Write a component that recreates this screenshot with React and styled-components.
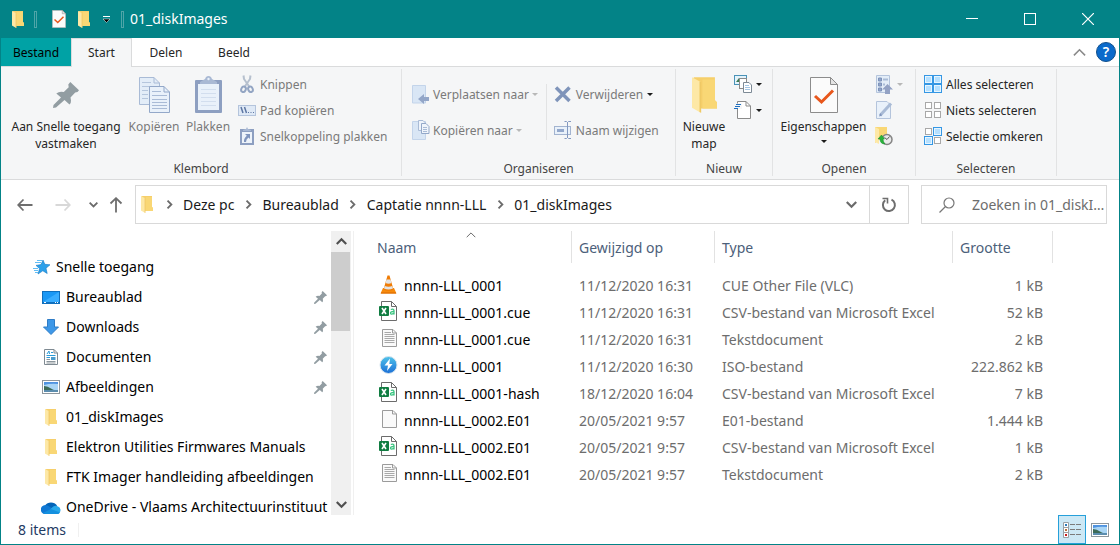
import React from "react";
import styled, { createGlobalStyle, css } from "styled-components";

const teal = "#038387";
const line = "#dadbdc";
const muted = "#6d6d6d";

const GlobalStyle = createGlobalStyle`
  *, *::before, *::after { box-sizing: border-box; }
  body { margin: 0; background: #fff; }
  body, button, input, table { font-family: "Noto Sans", "Open Sans", sans-serif; }
  button { margin: 0; padding: 0; border: 0; background: none; color: inherit; font-size: inherit; }
  svg { display: block; flex: none; }
`;

/* ---------- icons ---------- */

const Svg = ({ w, h, children, ...rest }) => (
  <svg width={w} height={h} viewBox={`0 0 ${w} ${h}`} fill="none" aria-hidden="true" {...rest}>
    {children}
  </svg>
);

const Folder = ({ w = 12, h = 17 }) => (
  <svg width={w} height={h} viewBox="0 0 12 17" fill="none" aria-hidden="true">
    <path d="M1 0H11V11L12 12V15H4L0 14V1Z" fill="#f6cf6b" />
    <path d="M5 1H11V11L12 12V15H5Z" fill="#f9d775" />
    <path d="M0 0L4.2 2.2V17L0 14.6Z" fill="#fde8a6" />
    <path d="M3.6 2V16.6L4.4 17V2.3Z" fill="#efc965" />
  </svg>
);

const CheckDoc = ({ w, h }) => (
  <svg width={w} height={h} viewBox="0 0 28 36" fill="none" aria-hidden="true">
    <path d="M.5 .5H20.5L27.5 7.5V35.5H.5Z" fill="#fbfbfb" stroke="#8c8c8c" />
    <path d="M20.5 .5V7.5H27.5Z" fill="#e4e4e4" stroke="#8c8c8c" />
    <path d="M5 19L11.500 25L23 13.500" stroke="#e8571c" strokeWidth="3" />
  </svg>
);

const Pin = ({ size = 26, color = "#929da2" }) => (
  <svg width={size} height={size} viewBox="0 0 26 26" aria-hidden="true">
    <path
      fill={color}
      d="M17.300 0L26 8.300L24.500 10L22.200 10.500L17.500 15.500L18 18.500Q18.200 21 16.500 22.500L11.500 18L3 25.500L0 26L.5 23L8 15.500L3.300 11.500Q6.500 8.800 10.800 10L15.700 5.200L15.300 2.500Z"
    />
  </svg>
);

const CopyBig = () => (
  <Svg w={31} h={36}>
    <path d="M.5 .5H15L20.500 6V27.500H.5Z" fill="#e3edf8" stroke="#a9bbd6" />
    <path d="M15 .5V6H20.500" stroke="#a9bbd6" />
    <path d="M3 5.500H12M3 9.500H12M3 13.500H9M3 17.500H9M3 21.500H9" stroke="#b5c6dd" />
    <path d="M10.500 9.500H25L30.500 15V35.500H10.500Z" fill="#e9f1fa" stroke="#93a8c9" />
    <path d="M25 9.500V15H30.500" stroke="#93a8c9" />
    <path d="M13 14.500H22M13 18.500H28M13 22.500H28M13 25.500H28M13 28.500H28M13 31.500H28" stroke="#a9bbd6" />
  </Svg>
);

const PasteBig = () => (
  <Svg w={27} h={37}>
    <rect x="0" y="4" width="27" height="33" rx="1" fill="#8d9fc1" />
    <rect x="3" y="8" width="21" height="26" fill="#e9f1fa" />
    <path d="M6 13.500H21M6 17.500H21M6 21.500H21M6 25.500H21M6 29.500H21" stroke="#d2deee" />
    <path d="M5 8V6L10 3L11 1Q13.500 -1 16 1L17 3L22 6V8Z" fill="#a9b9d4" />
    <circle cx="13.500" cy="3" r="1.200" fill="#e9f1fa" />
  </Svg>
);

const Scissors = () => (
  <Svg w={18} h={18}>
    <path d="M5.500 0.500L6 4L11.500 12M12.500 0.500L12 4L6.500 12" stroke="#b6c0ce" strokeWidth="2" />
    <ellipse cx="5.500" cy="14.300" rx="2.200" ry="2.800" transform="rotate(25 5.500 14.300)" stroke="#93a5c3" strokeWidth="2" />
    <ellipse cx="12.500" cy="14.300" rx="2.200" ry="2.800" transform="rotate(-25 12.500 14.300)" stroke="#93a5c3" strokeWidth="2" />
  </Svg>
);

const PathIcon = () => (
  <Svg w={18} h={11}>
    <rect x=".5" y=".5" width="17" height="10" fill="#dfe9f6" stroke="#b4c4dc" />
    <path d="M3 2L5 8M6.500 2L8.500 8" stroke="#5d76a3" strokeWidth="1.500" />
    <path d="M10 7.500H11M12.500 7.500H13.500M15 7.500H16" stroke="#5d76a3" />
  </Svg>
);

const PasteLink = () => (
  <Svg w={18} h={18}>
    <rect x="2" y="2" width="14" height="16" fill="#8d9fc1" />
    <rect x="4" y="5" width="10" height="11" fill="#edf3fa" />
    <path d="M5 4V3L8 2L9 0L10 2L13 3V4Z" fill="#a9b9d4" />
    <path d="M7 7H12V12L10.500 10.500Q8 12 8 15H6Q5.500 11.500 8.800 8.800Z" fill="#8095bd" />
  </Svg>
);

const MoveTo = () => (
  <Svg w={18} h={19}>
    <path d="M.5 .5H13.500V18H.5Z" fill="#d9e6f5" stroke="#c3d4ea" />
    <path d="M12 9V12H17V16H12V19L6 14Z" fill="#93a6c8" />
  </Svg>
);

const CopyTo = () => (
  <Svg w={18} h={20}>
    <path d="M.5 1.500H13.500V19.500H.5Z" fill="#d9e6f5" stroke="#c3d4ea" />
    <path d="M6.500 .5H11L13.500 3V10.500H6.500Z" fill="#eff4fb" stroke="#a9bbd6" />
    <path d="M9.500 3.500H14L17 6.500V13.500H9.500Z" fill="#eff4fb" stroke="#93a8c9" />
    <path d="M11 7.500H15M11 9.500H15M11 11.500H15" stroke="#a9bbd6" />
  </Svg>
);

const DeleteX = () => (
  <Svg w={18} h={17}>
    <path d="M2 1.500L15.500 15M15.500 1.500L2 15" stroke="#7f94ba" strokeWidth="3.500" />
  </Svg>
);

const RenameIcon = () => (
  <Svg w={18} h={18}>
    <rect x=".5" y="5.500" width="16" height="8" fill="#e9f1fa" stroke="#a3b4d0" />
    <rect x="3" y="8" width="7" height="3" fill="#93a8cc" />
    <path d="M13.500 1V17M10.500 .5H12.500L13.500 1.500L14.500 .5H17M10.500 17.500H12.500L13.500 16.500L14.500 17.500H17" stroke="#8399c0" />
  </Svg>
);

const NewItem = () => (
  <Svg w={18} h={18}>
    <rect x=".5" y=".5" width="12" height="9" fill="#e4f3fb" stroke="#4a93b8" />
    <path d="M2 7L5 3L8 7Z" fill="#3a7a53" />
    <rect x="5.500" y="3.500" width="7" height="10" fill="#fff" stroke="#8b8b8b" />
    <path d="M9.500 7.500H15L17.500 10V17.500H9.500Z" fill="#fff" stroke="#7d8a96" />
    <path d="M11 10.500H15M11 12.500H16M11 14.500H16" stroke="#a5c6e4" />
  </Svg>
);

const EasyAccess = () => (
  <Svg w={18} h={18}>
    <path d="M3.500 .5H12L16.500 5V17.500H3.500Z" fill="#fff" stroke="#8b8b8b" />
    <path d="M12 .5V5H16.500" stroke="#8b8b8b" />
    <path d="M1 2.500H8V8H0Z" fill="#f5f6f7" />
    <path d="M2 3.500H7M1 5.500H6M0 7.500H4" stroke="#1f6fc0" />
  </Svg>
);

const OpenIcon = () => (
  <Svg w={17} h={19}>
    <path d="M.5 .5H13.500V17.500H.5Z" fill="#e3edf8" stroke="#b4c4dc" />
    <path d="M2.500 3H5.500V6H2.500ZM2.500 8H5.500V11H2.500ZM2.500 13H5.500V16H2.500Z" fill="#93a6c8" stroke="#7d92ba" />
    <path d="M7 4.500H12M7 9.500H9" stroke="#a9bbd6" strokeWidth="2" />
    <path d="M11.500 9L17 14.500H14V19H9V14.500H6Z" fill="#93a2c4" />
  </Svg>
);

const EditIcon = () => (
  <Svg w={17} h={18}>
    <path d="M.5 .5H11L14.500 4V17.500H.5Z" fill="#e9f1fa" stroke="#b4c4dc" />
    <path d="M15 2.500L4 14.500" stroke="#a9bbd6" strokeWidth="3" />
    <path d="M4.500 12L3 15.500L6 14.500Z" fill="#8095bd" />
  </Svg>
);

const HistoryIcon = () => (
  <Svg w={18} h={19}>
    <path d="M0 0H12V13H4L0 16Z" fill="#f9d775" />
    <path d="M0 0L4 2V17L0 15Z" fill="#fde8a6" />
    <circle cx="12" cy="12.500" r="5" fill="#e9eaea" stroke="#858585" strokeWidth="1.500" />
    <path d="M12 12.500L14.500 9.500M12 12.500L9.500 10.500" stroke="#5a5a5a" />
    <path d="M3 12L6.500 8L9.500 12H8Q8 15 10 17Q5 17 5 12Z" fill="#28b43a" stroke="#178a2a" strokeWidth=".5" />
  </Svg>
);

const SelectIcon = ({ on }) => (
  <Svg w={18} h={18}>
    {[[0, 0], [9, 0], [0, 9], [9, 9]].map(([x, y], i) =>
      on[i] ? (
        <g key={i}>
          <rect x={x} y={y} width="9" height="9" fill="#3597e4" />
          <rect x={x + 1} y={y + 1} width="7" height="7" fill="#e6f5ff" />
          <rect x={x + 2} y={y + 2} width="5" height="5" fill="#b5e0ff" />
        </g>
      ) : (
        <rect key={i} x={x + 1.5} y={y + 1.5} width="6" height="6" fill="#fff" stroke="#a8a8a8" />
      )
    )}
  </Svg>
);

const Caret = ({ color = "#1b1b1b" }) => (
  <Svg w={6} h={3}>
    <path d="M0 0H6L3 3Z" fill={color} />
  </Svg>
);

const Chevron = ({ dir, color = "#6b6b6b", w = 9, sw = 2 }) => {
  const turn = { down: 0, up: 180, right: -90 }[dir];
  return (
    <svg width={w} height={w} viewBox="0 0 10 10" fill="none" aria-hidden="true">
      <path d="M.7 2.800L5 7.100L9.300 2.800" stroke={color} strokeWidth={sw} transform={`rotate(${turn} 5 5)`} />
    </svg>
  );
};

const Arrow = ({ turn = 0, color = "#6e6e6e" }) => (
  <Svg w={16} h={16}>
    <path d="M15.500 8H1.500M6.500 2.500L1.200 8L6.500 13.500" stroke={color} strokeWidth="1.800" transform={`rotate(${turn} 8 8)`} />
  </Svg>
);

const Star = () => (
  <Svg w={18} h={16}>
    <path d="M10 1L11.800 5.300L17 5.800L13 9.200L14.200 14.500L9.800 11.800L5 15L6.600 9.600L3 6.400L8 5.600Z" fill="#2ba0ea" stroke="#1479c4" strokeWidth=".6" />
    <path d="M4 1.500H9M2 3.500H8M0 9.500H5M1 11.500H5M2 13.500H5" stroke="#62bdf5" />
  </Svg>
);

const Desktop = () => (
  <Svg w={18} h={13}>
    <rect x=".5" y=".5" width="17" height="12" fill="#1a98f5" stroke="#0f6fbd" />
    <path d="M1 11L17 1V11Z" fill="#39adff" />
    <path d="M1 11.500H17" stroke="#0f6fbd" />
    <path d="M2 11.500H4M13 11.500H14M15 11.500H16" stroke="#fff" />
  </Svg>
);

const Download = () => (
  <Svg w={18} h={16}>
    <path d="M5.500 .5H12.500V8H16.500L9 15.500L1.500 8H5.500Z" fill="#3e98e8" stroke="#2f7cc6" />
  </Svg>
);

const Documents = () => (
  <Svg w={18} h={16}>
    <path d="M2.500 .5H12L15.500 4V15.500H2.500Z" fill="#fff" stroke="#7f8a92" />
    <path d="M12 .5V4H15.500" stroke="#7f8a92" />
    <path d="M5 5L7 2L7.500 5M9 3.500H11M4.500 6.500H13.500M4.500 8.500H8" stroke="#2b9bd8" />
    <path d="M9 8H13.500V11H9Z" fill="#4b9ccd" />
    <path d="M4.500 10.500H8M4.500 12.500H13.500M4.500 14H13.500" stroke="#8c969c" />
  </Svg>
);

const Picture = () => (
  <Svg w={18} h={14}>
    <rect x=".5" y=".5" width="17" height="13" fill="#fff" stroke="#8e979d" />
    <rect x="2" y="2" width="14" height="10" fill="#a9d5f5" />
    <path d="M2 2H16V4Q9 3 2 5Z" fill="#4f93e0" />
    <path d="M2 6Q6 6 9 8.500T16 10H2Z" fill="#3d6b58" />
    <path d="M2 10H16V12H2Z" fill="#5b8dae" />
  </Svg>
);

const OneDrive = () => (
  <Svg w={20} h={13}>
    <path d="M4 4.500A7 6 0 0 1 16 4.500L12 9H2Z" fill="#0364b8" />
    <path d="M4.500 13A4.500 4.500 0 1 1 6.500 4.600L18 11.500Q17 13 15 13Z" fill="#0f78d4" />
    <path d="M6 13L10.500 7Q14 3.500 17 5.500A3.900 3.900 0 0 1 16 13Z" fill="#28a8ea" />
    <path d="M2 12Q3 13 4.500 13H16Q18 13 19 11.500L10 8Z" fill="#1490df" />
  </Svg>
);

const Vlc = () => (
  <Svg w={20} h={19}>
    <path d="M4 13H15L17.500 18.500H1.500Z" fill="#f78b0c" />
    <path d="M8.500 .5H10.500L14.500 14.500Q9.500 17 4.500 14.500Z" fill="#f07c05" />
    <path d="M7.500 4.500H11.500L12.500 8Q9.500 9.500 6.500 8ZM5.700 11Q9.500 12.500 13.300 11L14 13.500Q9.500 15.500 5 13.500Z" fill="#e3e3e3" />
    <path d="M2 18H17" stroke="#d86600" />
  </Svg>
);

const Excel = () => (
  <Svg w={20} h={20}>
    <path d="M2.500 .5H12.500L17.500 5.500V19.500H2.500Z" fill="#fff" stroke="#6c6c6c" />
    <path d="M12.500 .5V5.500H17.500" stroke="#6c6c6c" />
    <rect x="0" y="5" width="10" height="10" rx="1" fill="#107c41" />
    <path d="M3 7L7 13M7 7L3 13" stroke="#fff" strokeWidth="1.600" />
    <path d="M11.800 8.500Q15 7.400 15 9.800V13.500M15 10.500Q11.500 10.300 11.500 12.100T15 12.300" stroke="#3cc481" strokeWidth="1.300" />
  </Svg>
);

const TextFile = ({ blank }) => (
  <Svg w={18} h={18}>
    <path d="M2.500 .5H13L16.500 4V17.500H2.500Z" fill="#fafafa" stroke="#9b9b9b" />
    <path d="M12.500 .5V4H16.500" stroke="#9b9b9b" />
    {!blank && <path d="M4.500 3.500H11M4.500 5.500H14.500M4.500 7.500H14.500M4.500 9.500H14.500M4.500 11.500H14.500M4.500 13.500H14.500" stroke="#a9a9a9" />}
  </Svg>
);

const Iso = () => (
  <Svg w={20} h={18}>
    <defs>
      <linearGradient id="disc" x1="0" y1="0" x2="0" y2="1">
        <stop offset="0" stopColor="#4fc3ea" />
        <stop offset="1" stopColor="#1c6fd6" />
      </linearGradient>
    </defs>
    <circle cx="9.500" cy="9" r="8.500" fill="url(#disc)" stroke="#d6e4ee" />
    <path d="M11 2.500L5.500 9.500H9L8 15L13.500 8H10.300Z" fill="#fff" />
  </Svg>
);

const DetailsIcon = () => (
  <Svg w={18} h={16}>
    <path d="M.5 .5H5.500V15.500H.5ZM.5 5.500H5.500M.5 10.500H5.500" fill="#fff" stroke="#9aa0a4" />
    <path d="M2 2H4V4H2Z" fill="#2a7ab8" />
    <path d="M2 7H4V9H2Z" fill="#b8703a" />
    <path d="M2 12H4V14H2Z" fill="#c81e1e" />
    <path d="M7 2.500H12M13 2.500H18M7 7.500H12M13 7.500H18M7 12.500H12M13 12.500H18" stroke="#7b7b7b" />
  </Svg>
);

/* ---------- window and title bar ---------- */

const Window = styled.div`
  display: flex;
  flex-direction: column;
  height: 100vh;
  border: solid ${teal};
  border-width: 0 1px 1px;
  background: #fff;
  color: #000;
`;

const TitleBar = styled.header`
  display: flex;
  align-items: center;
  flex: none;
  height: 38px;
  padding-left: 10px;
  background: ${teal};
  color: #fff;
`;

const QuickButton = styled.button`
  display: grid;
  place-items: center;
  width: ${(p) => p.$w || 26}px;
  height: 26px;
`;

const BarDivider = styled.span`
  width: 3px;
  height: 17px;
  margin: 0 ${(p) => p.$right}px 0 ${(p) => p.$left}px;
  border: 1px solid #4fa5a8;
`;

const WindowTitle = styled.h1`
  flex: 1;
  margin: 0;
  font-size: 14px;
  font-weight: 400;
  line-height: 20px;
`;

const WindowButtons = styled.div`
  display: flex;
  padding-right: 2px;
`;

const WindowButton = styled.button`
  display: grid;
  place-items: center;
  width: 58px;
  height: 38px;
`;

/* ---------- ribbon ---------- */

const Tabs = styled.nav`
  display: flex;
  align-items: stretch;
  flex: none;
  height: 29px;
  border-bottom: 1px solid ${line};
  font-size: 12px;
`;

const Tab = styled.button`
  width: ${(p) => p.$w || 68}px;
  color: #262626;
  ${(p) => p.$file && css`
    background: #00a2a5;
    color: #000;
  `}
  ${(p) => p.$active && css`
    margin-bottom: -1px;
    padding-bottom: 2px;
    border: solid ${line};
    border-width: 1px 1px 0;
    background: #f5f6f7;
  `}
`;

const TabTools = styled.div`
  display: flex;
  align-items: center;
  gap: 10px;
  margin-left: auto;
  padding-right: 3px;
`;

const HelpButton = styled.button`
  width: 20px;
  height: 20px;
  border: 1px solid #12508c;
  border-radius: 50%;
  background: #0a6acb;
  color: #fff;
  font-size: 14px;
  font-weight: 600;
  line-height: 16px;
`;

const Ribbon = styled.div`
  display: flex;
  flex: none;
  height: 113px;
  padding: 2px 0 3px;
  border-bottom: 1px solid ${line};
  background: #f5f6f7;
  font-size: 12px;
  line-height: 17px;
  color: #262626;
`;

const Group = styled.section`
  display: flex;
  flex-direction: column;
  flex: none;
  width: ${(p) => p.$w}px;
  border-right: 1px solid #e2e3e4;
`;

const GroupBody = styled.div`
  display: flex;
  flex: 1;
  padding: 2px 0 0 ${(p) => p.$pad}px;
`;

const GroupName = styled.h2`
  margin: 0;
  color: #444;
  font-size: 12px;
  font-weight: 400;
  line-height: 15px;
  text-align: center;
`;

const BigButton = styled.button`
  display: flex;
  flex-direction: column;
  align-items: center;
  width: ${(p) => p.$w}px;
  height: 81px;
  line-height: 17px;
  white-space: nowrap;
  color: ${(p) => (p.disabled ? "#7a7a7a" : "#262626")};
`;

const BigIcon = styled.span`
  display: grid;
  place-items: center;
  height: 47px;
`;

const CaretSlot = styled.span`
  display: grid;
  place-items: center;
  height: 12px;
`;

const Stack = styled.div`
  display: flex;
  flex-direction: column;
  gap: ${(p) => p.$gap || 0}px;
  padding: ${(p) => p.$top || 0}px 0 0 ${(p) => p.$left || 0}px;
`;

const SmallButton = styled.button`
  display: flex;
  align-items: center;
  gap: ${(p) => p.$gap || 4}px;
  height: 26px;
  white-space: nowrap;
  color: ${(p) => (p.disabled ? "#7a7a7a" : "#262626")};
`;

const SmallIcon = styled.span`
  display: grid;
  place-items: center;
  width: 18px;
`;

const InnerDivider = styled.span`
  width: 1px;
  height: 56px;
  margin: 13px 0 0 8px;
  background: #e2e3e4;
`;

/* ---------- address bar ---------- */

const AddressRow = styled.div`
  display: flex;
  align-items: center;
  flex: none;
  height: 51px;
  padding: 0 12px 2px;
  font-size: 14px;
`;

const NavButton = styled.button`
  display: grid;
  place-items: center;
  width: ${(p) => p.$w}px;
  height: 30px;
`;

const AddressBox = styled.div`
  display: flex;
  align-items: center;
  flex: 1;
  height: 39px;
  margin-right: 12px;
  padding-left: 5px;
  border: 1px solid #d9d9d9;
`;

const Crumb = styled.a`
  color: #1a1a1a;
  line-height: 20px;
  text-decoration: none;
  white-space: nowrap;
`;

const CrumbArrow = styled.span`
  display: grid;
  place-items: center;
  width: 28px;
  &:nth-of-type(1) { margin-left: 2px; }
`;

const BoxButton = styled.button`
  display: grid;
  place-items: center;
  align-self: stretch;
  width: 39px;
  ${(p) => p.$push && css`margin-left: auto; width: 36px;`}
  ${(p) => p.$split && css`border-left: 1px solid #d9d9d9;`}
`;

const SearchBox = styled.label`
  display: flex;
  align-items: center;
  gap: 17px;
  width: 186px;
  height: 39px;
  padding: 0 1px 0 17px;
  border: 1px solid #d9d9d9;
`;

const SearchInput = styled.input`
  flex: 1;
  min-width: 0;
  padding: 0;
  border: 0;
  outline: 0;
  background: none;
  font-size: 14px;
  text-overflow: ellipsis;
  &::placeholder { color: ${muted}; opacity: 1; }
`;

/* ---------- body ---------- */

const Body = styled.div`
  display: flex;
  flex: 1;
  min-height: 0;
`;

const Sidebar = styled.aside`
  display: flex;
  flex: none;
  width: 353px;
  padding-right: 2px;
  border-right: 1px solid #f0f0f0;
`;

const Places = styled.ul`
  flex: 1;
  min-width: 0;
  margin: 0;
  padding: 21px 0 0;
  overflow: hidden;
  list-style: none;
`;

const Place = styled.a`
  display: flex;
  align-items: center;
  gap: 5px;
  height: 30px;
  padding: 0 4px 0 ${(p) => (p.$root ? 32 : 40)}px;
  color: #000;
  font-size: 14px;
  line-height: 20px;
  text-decoration: none;
  white-space: nowrap;
`;

const PlaceIcon = styled.span`
  display: flex;
  justify-content: center;
  flex: none;
  width: ${(p) => (p.$root ? 18 : 20)}px;
`;

const PlaceName = styled.span`
  flex: 1;
`;

const ScrollTrack = styled.div`
  display: flex;
  flex-direction: column;
  justify-content: space-between;
  width: 20px;
  background: #f0f0f0;
`;

const ScrollButton = styled.button`
  display: grid;
  place-items: center;
  height: 21px;
`;

const ScrollThumb = styled.div`
  height: 79px;
  margin: 0 1px auto 0;
  background: #cdcdcd;
`;

const Files = styled.main`
  flex: 1;
  min-width: 0;
  overflow: hidden;
`;

const FileTable = styled.table`
  width: 699px;
  table-layout: fixed;
  border-collapse: separate;
  border-spacing: 0;
  font-size: 14px;
  line-height: 20px;
`;

const HeadCell = styled.th`
  position: relative;
  height: 32px;
  padding: 2px 0 0 ${(p) => p.$pad || 7}px;
  border-right: 1px solid #e2e2e2;
  color: #4c607a;
  font-weight: 400;
  text-align: left;
`;

const SortMark = styled.span`
  position: absolute;
  top: -1px;
  right: 95px;
`;

const Cell = styled.td`
  height: 27px;
  padding: 0 ${(p) => (p.$right ? 10 : 0)}px 0 7px;
  color: ${muted};
  text-align: ${(p) => (p.$right ? "right" : "left")};
  white-space: nowrap;
`;

const NameCell = styled(Cell)`
  padding-left: 25px;
  color: #000;
`;

const FileName = styled.span`
  display: flex;
  align-items: center;
  height: 27px;
  gap: 5px;
`;

const FileIcon = styled.span`
  display: flex;
  justify-content: center;
  width: 20px;
  padding-bottom: 3px;
`;

const HeadGap = styled.tr`
  height: 9px;
`;

const StatusBar = styled.footer`
  display: flex;
  align-items: center;
  flex: none;
  height: 29px;
  padding: 0 5px 0 17px;
  color: #1f3b63;
  font-size: 14px;
`;

const Count = styled.span`
  padding-right: 12px;
  border-right: 1px solid #f0f0f0;
  line-height: 14px;
`;

const ViewButton = styled.button`
  display: grid;
  place-items: center;
  width: 28px;
  height: 29px;
  ${(p) => p.$on && css`
    margin-left: auto;
    border: 1px solid #26a0da;
    background: #cce8f5;
  `}
`;

const crumbs = ["Deze pc", "Bureaublad", "Captatie nnnn-LLL", "01_diskImages"];

const places = [
  ["Bureaublad", <Desktop />, true],
  ["Downloads", <Download />, true],
  ["Documenten", <Documents />, true],
  ["Afbeeldingen", <Picture />, true],
  ["01_diskImages", <Folder />],
  ["Elektron Utilities Firmwares Manuals", <Folder />],
  ["FTK Imager handleiding afbeeldingen", <Folder />],
  ["OneDrive - Vlaams Architectuurinstituut", <OneDrive />],
];

const csv = "CSV-bestand van Microsoft Excel";
const files = [
  [<Vlc />, "nnnn-LLL_0001", "11/12/2020 16:31", "CUE Other File (VLC)", "1 kB"],
  [<Excel />, "nnnn-LLL_0001.cue", "11/12/2020 16:31", csv, "52 kB"],
  [<TextFile />, "nnnn-LLL_0001.cue", "11/12/2020 16:31", "Tekstdocument", "2 kB"],
  [<Iso />, "nnnn-LLL_0001", "11/12/2020 16:30", "ISO-bestand", "222.862 kB"],
  [<Excel />, "nnnn-LLL_0001-hash", "18/12/2020 16:04", csv, "7 kB"],
  [<TextFile blank />, "nnnn-LLL_0002.E01", "20/05/2021 9:57", "E01-bestand", "1.444 kB"],
  [<Excel />, "nnnn-LLL_0002.E01", "20/05/2021 9:57", csv, "1 kB"],
  [<TextFile />, "nnnn-LLL_0002.E01", "20/05/2021 9:57", "Tekstdocument", "2 kB"],
];

const Small = ({ icon, label, title, caret, disabled, gap }) => (
  <SmallButton disabled={disabled} aria-label={title} $gap={gap}>
    <SmallIcon>{icon}</SmallIcon>
    {label}
    {caret && <Caret color={caret} />}
  </SmallButton>
);

export default function App() {
  return (
    <Window>
      <GlobalStyle />
      <TitleBar>
        <QuickButton $w={14} aria-label="Map"><Folder /></QuickButton>
        <BarDivider $left={9} $right={8} />
        <QuickButton $w={28} aria-label="Eigenschappen"><CheckDoc w={14} h={18} /></QuickButton>
        <QuickButton $w={22} aria-label="Nieuwe map"><Folder /></QuickButton>
        <QuickButton $w={22} aria-label="Werkbalk aanpassen">
          <Svg w={7} h={7}><path d="M0 .5H7" stroke="#fff" /><path d="M0 3H7L3.500 6.500Z" fill="#000" stroke="#fff" strokeWidth=".5" /></Svg>
        </QuickButton>
        <BarDivider $left={4} $right={6} />
        <WindowTitle>01_diskImages</WindowTitle>
        <WindowButtons>
          <WindowButton aria-label="Minimaliseren"><Svg w={12} h={12}><path d="M0 5.500H12" stroke="#fff" /></Svg></WindowButton>
          <WindowButton aria-label="Maximaliseren"><Svg w={12} h={12}><rect x=".5" y=".5" width="11" height="11" stroke="#fff" /></Svg></WindowButton>
          <WindowButton aria-label="Sluiten"><Svg w={12} h={12}><path d="M0 0L12 12M12 0L0 12" stroke="#fff" strokeWidth="1.200" /></Svg></WindowButton>
        </WindowButtons>
      </TitleBar>

      <Tabs>
        <Tab $file $w={70}>Bestand</Tab>
        <Tab $active $w={61}>Start</Tab>
        <Tab>Delen</Tab>
        <Tab>Beeld</Tab>
        <TabTools>
          <button aria-label="Lint minimaliseren"><Chevron dir="up" w={13} sw={1.2} color="#8a8a8a" /></button>
          <HelpButton aria-label="Help">?</HelpButton>
        </TabTools>
      </Tabs>

      <Ribbon>
        <Group $w={401}>
          <GroupBody $pad={6}>
            <BigButton $w={118}><BigIcon><Pin /></BigIcon>Aan Snelle toegang<br />vastmaken</BigButton>
            <BigButton $w={58} disabled><BigIcon><CopyBig /></BigIcon>Kopiëren</BigButton>
            <BigButton $w={50} disabled><BigIcon><PasteBig /></BigIcon>Plakken</BigButton>
            <Stack $left={5}>
              <Small disabled icon={<Scissors />} label="Knippen" />
              <Small disabled icon={<PathIcon />} label="Pad kopiëren" />
              <Small disabled icon={<PasteLink />} label="Snelkoppeling plakken" />
            </Stack>
          </GroupBody>
          <GroupName>Klembord</GroupName>
        </Group>

        <Group $w={274}>
          <GroupBody $pad={10}>
            <Stack $top={10} $gap={10}>
              <Small disabled gap={3} icon={<MoveTo />} label="Verplaatsen naar" caret="#b8b8b8" />
              <Small disabled gap={3} icon={<CopyTo />} label="Kopiëren naar" caret="#b8b8b8" />
            </Stack>
            <InnerDivider />
            <Stack $top={10} $gap={10} $left={7}>
              <Small disabled icon={<DeleteX />} label="Verwijderen" caret="#1b1b1b" />
              <Small disabled icon={<RenameIcon />} label="Naam wijzigen" />
            </Stack>
          </GroupBody>
          <GroupName>Organiseren</GroupName>
        </Group>

        <Group $w={97}>
          <GroupBody $pad={3}>
            <BigButton $w={50}><BigIcon><Folder w={25} h={36} /></BigIcon>Nieuwe<br />map</BigButton>
            <Stack $left={5}>
              <Small title="Nieuw item" icon={<NewItem />} caret="#1b1b1b" />
              <Small title="Snelle toegang" icon={<EasyAccess />} caret="#1b1b1b" />
            </Stack>
          </GroupBody>
          <GroupName>Nieuw</GroupName>
        </Group>

        <Group $w={143}>
          <GroupBody $pad={3}>
            <BigButton $w={95}>
              <BigIcon><CheckDoc w={28} h={36} /></BigIcon>Eigenschappen
              <CaretSlot><Caret /></CaretSlot>
            </BigButton>
            <Stack $left={4}>
              <Small disabled title="Openen" icon={<OpenIcon />} caret="#b8b8b8" />
              <Small disabled title="Bewerken" icon={<EditIcon />} />
              <Small title="Geschiedenis" icon={<HistoryIcon />} />
            </Stack>
          </GroupBody>
          <GroupName>Openen</GroupName>
        </Group>

        <Group $w={141}>
          <GroupBody $pad={8}>
            <Stack>
              <Small icon={<SelectIcon on={[1, 1, 1, 1]} />} label="Alles selecteren" />
              <Small icon={<SelectIcon on={[0, 0, 0, 0]} />} label="Niets selecteren" />
              <Small icon={<SelectIcon on={[0, 1, 1, 0]} />} label="Selectie omkeren" />
            </Stack>
          </GroupBody>
          <GroupName>Selecteren</GroupName>
        </Group>
      </Ribbon>

      <AddressRow>
        <NavButton $w={24} aria-label="Terug"><Arrow /></NavButton>
        <NavButton $w={52} aria-label="Vooruit"><Arrow turn={180} color="#d8d8d8" /></NavButton>
        <NavButton $w={8} aria-label="Recente locaties"><Chevron dir="down" /></NavButton>
        <NavButton $w={38} aria-label="Omhoog"><Arrow turn={90} /></NavButton>
        <AddressBox>
          <Folder />
          {crumbs.map((name) => (
            <React.Fragment key={name}>
              <CrumbArrow><Chevron dir="right" /></CrumbArrow>
              <Crumb href="#">{name}</Crumb>
            </React.Fragment>
          ))}
          <BoxButton $push aria-label="Vorige locaties"><Chevron dir="down" w={11} /></BoxButton>
          <BoxButton $split aria-label="Vernieuwen">
            <Svg w={16} h={16}>
              <path d="M10.500 2.600A6 6 0 1 1 4.200 3.300" stroke="#6e6e6e" strokeWidth="2" />
              <path d="M1.500 1.500H6.500V6.500" stroke="#6e6e6e" strokeWidth="1.600" />
            </Svg>
          </BoxButton>
        </AddressBox>
        <SearchBox>
          <Svg w={16} h={16}>
            <circle cx="10" cy="6" r="5" stroke="#777" strokeWidth="1.200" />
            <path d="M6.500 9.500L.5 15.500" stroke="#777" strokeWidth="1.200" />
          </Svg>
          <SearchInput type="text" aria-label="Zoeken" placeholder="Zoeken in 01_diskImages" />
        </SearchBox>
      </AddressRow>

      <Body>
        <Sidebar>
          <Places>
            <li>
              <Place href="#" $root><PlaceIcon $root><Star /></PlaceIcon>Snelle toegang</Place>
            </li>
            {places.map(([name, icon, pinned]) => (
              <li key={name}>
                <Place href="#">
                  <PlaceIcon>{icon}</PlaceIcon>
                  <PlaceName>{name}</PlaceName>
                  {pinned && <Pin size={13} />}
                </Place>
              </li>
            ))}
          </Places>
          <ScrollTrack>
            <ScrollButton aria-label="Omhoog schuiven"><Chevron dir="up" w={11} color="#505050" /></ScrollButton>
            <ScrollThumb />
            <ScrollButton aria-label="Omlaag schuiven"><Chevron dir="down" w={11} color="#505050" /></ScrollButton>
          </ScrollTrack>
        </Sidebar>
        <Files>
          <FileTable>
            <colgroup>
              <col width="218" /><col width="143" /><col width="238" /><col width="100" />
            </colgroup>
            <thead>
              <tr>
                <HeadCell $pad={23}>Naam<SortMark><Chevron dir="up" w={10} sw={1} /></SortMark></HeadCell>
                <HeadCell>Gewijzigd op</HeadCell>
                <HeadCell>Type</HeadCell>
                <HeadCell>Grootte</HeadCell>
              </tr>
            </thead>
            <tbody>
              <HeadGap />
              {files.map(([icon, name, date, type, size], i) => (
                <tr key={i}>
                  <NameCell><FileName><FileIcon>{icon}</FileIcon>{name}</FileName></NameCell>
                  <Cell>{date}</Cell>
                  <Cell>{type}</Cell>
                  <Cell $right>{size}</Cell>
                </tr>
              ))}
            </tbody>
          </FileTable>
        </Files>
      </Body>

      <StatusBar>
        <Count>8 items</Count>
        <ViewButton $on aria-label="Details"><DetailsIcon /></ViewButton>
        <ViewButton aria-label="Grote pictogrammen"><Picture /></ViewButton>
      </StatusBar>
    </Window>
  );
}
